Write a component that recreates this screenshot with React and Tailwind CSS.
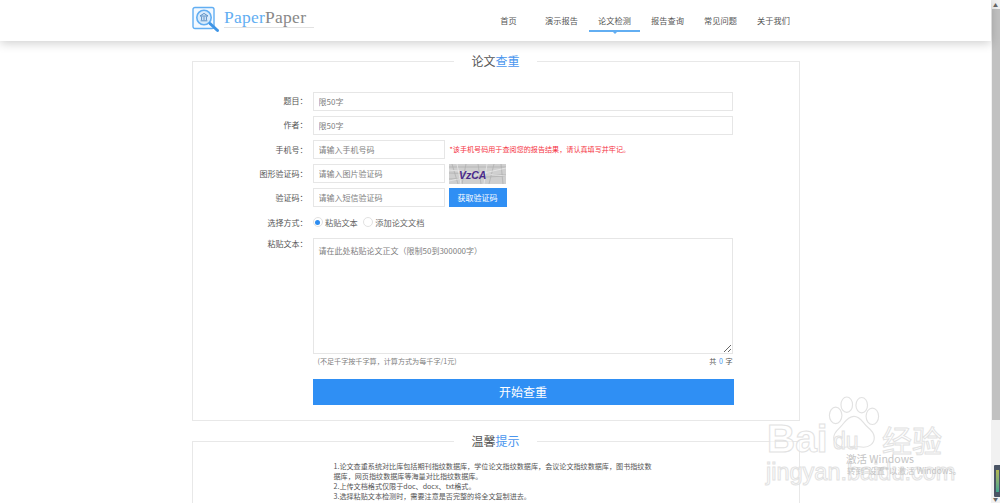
import React from 'react';

const cjk = 'font-["Noto_Sans_CJK_SC","Noto_Sans",sans-serif]';
const navItems = ['首页', '演示报告', '论文检测', '报告查询', '常见问题', '关于我们'];
const tips = [
  '1.论文查重系统对比库包括期刊指纹数据库，学位论文指纹数据库，会议论文指纹数据库，图书指纹数据库，网页指纹数据库等海量对比指纹数据库。',
  '2.上传文档格式仅限于doc、docx、txt格式。',
  '3.选择粘贴文本检测时，需要注意是否完整的将全文复制进去。',
];

function Logo() {
  return (
    <svg width="29" height="27" viewBox="0 0 29 27" fill="none">
      <rect x="1" y="1.5" width="21" height="21" rx="2" stroke="#62aef2" strokeWidth="1.4" fill="#f3f9ff" />
      <circle cx="12" cy="11.5" r="7.2" stroke="#62aef2" strokeWidth="1.6" fill="#d8ebfc" />
      <path d="M8 10l4-2.6 4 2.6zM8.6 14.8h6.8M9.6 10.5v3.6M12 10.5v3.6M14.4 10.5v3.6" stroke="#5d90c4" strokeWidth="1" />
      <path d="M18 17.5l7.5 7" stroke="#3f95e6" strokeWidth="3" strokeLinecap="round" />
    </svg>
  );
}

function Header() {
  return (
    <header className="relative z-10 flex h-[41px] shrink-0 justify-center bg-white shadow-[0_2px_10px_rgba(0,0,0,0.2)]">
      <div className="flex w-[607px] items-start justify-between">
        <div className="flex items-start pt-[6px]">
          <Logo />
          <div className="ml-[3px] w-[90px] border-b border-[#e2e2e2] pt-[2px]">
            <div className='font-["Liberation_Serif",serif] text-[17.5px] leading-[19px] tracking-[0.25px] text-[#888]'>
              <span className="text-[#62aef2]">Paper</span>Paper
            </div>
          </div>
        </div>
        <nav className={`-mr-[1px] flex ${cjk} text-[8.2px] text-[#555]`}>
          {navItems.map((item) => (
            <a key={item} className="relative flex h-[32px] w-[53px] items-center justify-center pt-[8px]">
              {item}
              {item === '论文检测' && (
                <>
                  <span className="absolute right-[1px] bottom-0 left-[1px] h-[2px] bg-[#62aef2]" />
                  <span className="absolute -bottom-[2px] left-[25px] h-0 w-0 border-x-2 border-t-2 border-x-transparent border-t-[#62aef2]" />
                </>
              )}
            </a>
          ))}
        </nav>
      </div>
    </header>
  );
}

function SectionTitle({ a, b }) {
  return (
    <h2 className={`mx-auto -mt-[9px] w-fit bg-white px-[17px] ${cjk} text-[12px] leading-[16px] font-normal text-[#555]`}>
      {a}<span className="text-[#4a96ee]">{b}</span>
    </h2>
  );
}

function Row({ label, children, className = 'h-[19px] items-center', labelClass = '' }) {
  return (
    <div className={`flex ${className}`}>
      <label className={`w-[115px] shrink-0 text-right text-[8px] text-[#555] ${labelClass}`}>{label}：</label>
      <div className="ml-[5px] flex flex-1 items-center">{children}</div>
    </div>
  );
}

function Field({ placeholder, className = 'w-[420px]' }) {
  return (
    <input
      placeholder={placeholder}
      className={`h-[19px] ${className} border border-[#e6e6e6] bg-white px-[5px] text-[8px] outline-none placeholder:text-[#808080]`}
    />
  );
}

function Captcha() {
  return (
    <svg width="57" height="20" viewBox="0 0 57 20" className="ml-[4px]">
      <rect width="57" height="20" fill="#cfcfcf" />
      <path d="M0 3h57M0 9l57 2M0 15l57-3M3 0l6 20M17 0l-4 20M29 0l3 20M45 0l-5 20M52 0l2 20" stroke="#adadad" strokeWidth="0.7" />
      <path d="M0 6l57 6M0 17l57-13M8 0l4 20M38 0l-3 20" stroke="#ececec" strokeWidth="0.7" />
      <text x="10" y="15" fontFamily="Liberation Sans" fontSize="10.5" fontWeight="700" fontStyle="italic" fill="#4a2a8c">VzCA</text>
    </svg>
  );
}

function Radio({ checked, children }) {
  return (
    <div className="flex items-center text-[8.2px] text-[#666]">
      <span className="flex h-[10px] w-[10px] items-center justify-center rounded-full border border-[#e2e2e2]">
        {checked && <span className="h-[5px] w-[5px] rounded-full bg-[#2d8cf0]" />}
      </span>
      <span className="ml-[2.5px]">{children}</span>
    </div>
  );
}

function Watermark() {
  const outline = '[-webkit-text-stroke:1px_#e2e2e2] text-white/60 font-["Liberation_Sans",sans-serif]';
  return (
    <div className="pointer-events-none absolute left-[760px] top-[392px] h-[111px] w-[200px]">
      <svg className="absolute left-[66px] top-[3px]" width="56" height="60" viewBox="0 0 58 60" fill="rgba(255,255,255,0.6)" stroke="#e2e2e2" strokeWidth="1.2">
        <ellipse cx="10" cy="20" rx="6.5" ry="8.5" />
        <ellipse cx="21.5" cy="9" rx="6" ry="8" />
        <ellipse cx="37" cy="9.5" rx="6" ry="8" />
        <ellipse cx="48" cy="21" rx="6.5" ry="8.5" />
        <path d="M29 21c7 0 9 7 14 11s7 7 7 11c0 7-6 10-11 10-4 0-6-1-10-1s-6 1-10 1c-6 0-11-4-11-10 0-5 3-7 7-11s7-11 14-11z" />
      </svg>
      <div className={`absolute left-[7px] top-[25px] text-[39px] leading-[44px] font-bold ${outline}`}>Bai</div>
      <div className={`absolute left-[73px] top-[36px] text-[23px] leading-[26px] ${outline}`}>du</div>
      <div className={`absolute left-[122px] top-[28px] text-[30px] leading-[38px] ${outline} ${cjk}`}>经验</div>
      <div className={`absolute left-[6px] top-[66px] text-[23.5px] leading-[28px] whitespace-nowrap ${outline}`}>jingyan.baidu.com</div>
      <div className={`absolute left-[86px] top-[60px] ${cjk} text-[10.5px] leading-[14px] whitespace-nowrap text-[#c4c4c4]`}>激活 Windows</div>
      <div className={`absolute left-[87px] top-[73px] ${cjk} text-[8.5px] leading-[10px] whitespace-nowrap text-[#c4c4c4]`}>转到"设置"以激活 Windows。</div>
    </div>
  );
}

function Scrollbar() {
  return (
    <div className="flex w-[9px] shrink-0 flex-col items-center bg-[#f1f1f1]">
      <div className="flex h-[9px] items-center text-[5px] leading-none text-[#666]">▲</div>
      <div className="h-[411px] w-[8px] shrink-0 bg-[#c1c1c1]" />
      <div className="mt-auto flex h-[9px] items-center text-[5px] leading-none text-[#666]">▼</div>
    </div>
  );
}

export default function App() {
  return (
    <div className={`relative flex h-[503px] w-[1000px] overflow-hidden bg-white ${cjk}`}>
      <div className="flex min-w-0 flex-1 flex-col">
        <Header />
        <main className="flex flex-col items-center pt-[20px]">
          <section className="h-[360px] w-[608px] shrink-0 border border-[#e8e8e8]">
            <SectionTitle a="论文" b="查重" />
            <div className="mt-[23px] flex flex-col gap-[5px]">
              <Row label="题目" labelClass="pb-[2px]"><Field placeholder="限50字" className="w-[420px] pb-px" /></Row>
              <Row label="作者" labelClass="pb-[2px]"><Field placeholder="限50字" className="w-[420px] pb-px" /></Row>
              <Row label="手机号">
                <Field placeholder="请输入手机号码" className="w-[132px]" />
                <span className="ml-[5px] text-[7.1px] text-[#f5333f]">*该手机号码用于查阅您的报告结果，请认真填写并牢记。</span>
              </Row>
              <Row label="图形验证码">
                <Field placeholder="请输入图片验证码" className="w-[132px]" />
                <Captcha />
              </Row>
              <Row label="验证码">
                <Field placeholder="请输入短信验证码" className="w-[132px]" />
                <button className="ml-[4px] h-[19px] w-[58px] bg-[#2f8ff4] text-[8px] text-white">获取验证码</button>
              </Row>
              <Row label="选择方式" className="h-[21px] items-center">
                <div className="flex gap-[5px]">
                  <Radio checked>粘贴文本</Radio>
                  <Radio>添加论文文档</Radio>
                </div>
              </Row>
              <Row label="粘贴文本" className="items-start">
                <textarea
                  placeholder="请在此处粘贴论文正文（限制50到300000字）"
                  className="h-[116px] w-[420px] border border-[#e6e6e6] px-[5px] py-[6px] text-[8px] outline-none placeholder:text-[#808080]"
                />
              </Row>
            </div>
            <div className="ml-[120px] flex w-[420px] items-center justify-between pt-[2px] text-[7.1px] leading-[10px] text-[#808080]">
              <span className="pl-[5px]">(不足千字按千字算，计算方式为每千字/1元)</span>
              <span className="text-[#555]">共 <span className="mx-[1px] text-[#4a96ee]">0</span> 字</span>
            </div>
            <button className="mt-[13px] ml-[120px] h-[26px] w-[421px] bg-[#2f8ff4] text-[12px] text-white">开始查重</button>
          </section>
          <section className="mt-[20px] h-[200px] w-[608px] shrink-0 border border-[#e8e8e8]">
            <SectionTitle a="温馨" b="提示" />
            <div className="mt-[12px] ml-[141px] w-[320px] text-[7.1px] leading-[10px] text-[#555]">
              {tips.map((t) => <p key={t}>{t}</p>)}
            </div>
          </section>
        </main>
      </div>
      <Scrollbar />
      <Watermark />
      <div className="absolute right-0 bottom-[6px] flex h-[32px] w-[6px] items-center rounded-l-[1px] bg-[#4a5464] pl-[2px]">
        <span className="h-[22px] w-[3px] bg-gradient-to-b from-[#b3b84e] to-[#3fa58f]" />
      </div>
    </div>
  );
}
